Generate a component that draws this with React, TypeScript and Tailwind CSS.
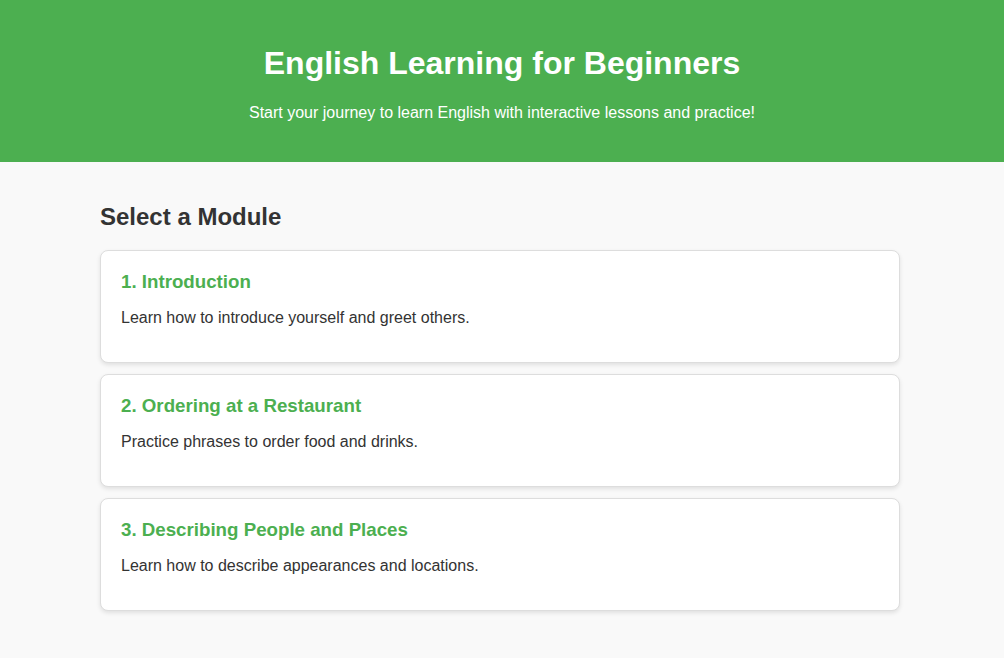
import React from 'react';

interface Module {
  id: number;
  title: string;
  description: string;
}

const modules: Module[] = [
  { id: 1, title: 'Introduction', description: 'Learn how to introduce yourself and greet others.' },
  { id: 2, title: 'Ordering at a Restaurant', description: 'Practice phrases to order food and drinks.' },
  { id: 3, title: 'Describing People and Places', description: 'Learn how to describe appearances and locations.' },
];

const App: React.FC = () => {
  return (
    <div className="min-h-screen bg-[#f9f9f9] font-['Liberation_Sans',Arial,sans-serif] text-[#333]">
      {/* Header */}
      <header className="bg-[#4caf50] text-white text-center pt-[45px] pb-[40px]">
        <h1 className="text-[32px] leading-[37px] font-bold">English Learning for Beginners</h1>
        <p className="mt-[22px] text-[16px] leading-[18px]">
          Start your journey to learn English with interactive lessons and practice!
        </p>
      </header>

      {/* Modules */}
      <main className="max-w-[804px] mx-auto pr-1 pt-[41px] pb-10">
        <h2 className="text-[24px] leading-[28px] font-bold text-[#333]">Select a Module</h2>
        <div className="mt-[19px] flex flex-col gap-[11px]">
          {modules.map((m) => (
            <div
              key={m.id}
              className="bg-white border border-[#ddd] rounded-[8px] shadow-[0_2px_4px_rgba(0,0,0,0.1)] px-5 pt-[20px] pb-[19px]"
            >
              <h3 className="text-[18.72px] leading-[22px] font-bold text-[#4caf50]">
                {m.id}. {m.title}
              </h3>
              <p className="mt-[16px] mb-[16px] text-[16px] leading-[18px] text-[#333]">{m.description}</p>
            </div>
          ))}
        </div>
      </main>
    </div>
  );
};

export default App;
